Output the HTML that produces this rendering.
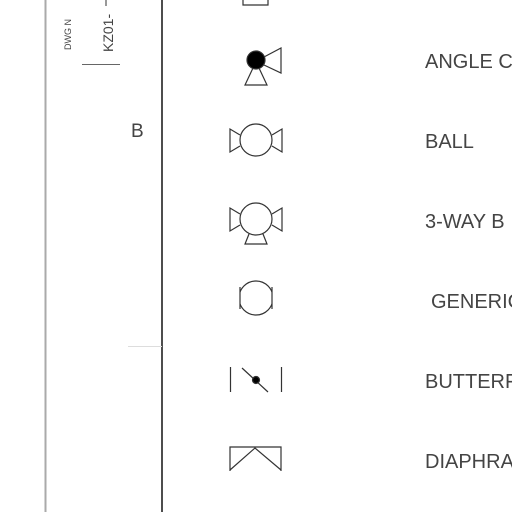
<!DOCTYPE html>
<html><head><style>
html,body{margin:0;padding:0;background:#fff;width:512px;height:512px;overflow:hidden}
svg{display:block}
text{font-family:"Liberation Sans",sans-serif;fill:#444}
</style></head><body>
<svg width="512" height="512" viewBox="0 0 512 512" xmlns="http://www.w3.org/2000/svg">
<defs><clipPath id="gc"><rect x="240" y="270" width="32" height="60"/></clipPath></defs>
<rect width="512" height="512" fill="#fff"/>
<line x1="45.5" y1="0" x2="45.5" y2="512" stroke="#aaa" stroke-width="2"/>
<line x1="162" y1="0" x2="162" y2="512" stroke="#222" stroke-width="1.6"/>
<line x1="82" y1="64.5" x2="120" y2="64.5" stroke="#666" stroke-width="1"/>
<line x1="128" y1="346.5" x2="162" y2="346.5" stroke="#ddd" stroke-width="1"/>
<text transform="translate(71,50) rotate(-90)" font-size="9" fill="#666">DWG N</text>
<text transform="translate(113,52) rotate(-90)" font-size="14" fill="#555">KZ01-</text>
<line x1="106" y1="0" x2="106" y2="6" stroke="#333" stroke-width="1"/>
<text x="131" y="137" font-size="19" fill="#444">B</text>
<g fill="none" stroke="#333" stroke-width="1.2">
<path d="M243 0 V5 H268 V0"/>
<circle cx="256" cy="60" r="9" fill="#000"/>
<path d="M264 57 L281 48 V73 L264 65"/>
<path d="M253 68 L245 85 H267 L259 68"/>
<circle cx="256" cy="140" r="16"/>
<path d="M240 135 L230 129 V152 L240 146 M272 135 L282 129 V152 L272 146"/>
<circle cx="256" cy="219" r="16"/>
<path d="M240 214 L230 208 V231 L240 225 M272 214 L282 208 V231 L272 225"/>
<path d="M249 234 L245 244 H267 L263 234"/>
<circle cx="256" cy="298" r="17" clip-path="url(#gc)"/>
<path d="M240 287 V309 M272 287 V309"/>
<path d="M230.5 367 V392 M281.5 367 V392 M242 368 L268 392"/>
<circle cx="256" cy="380" r="3.5" fill="#000"/>
<path d="M230 471 V447 H281 V471 M230 470 L255 448 L281 470"/>
</g>
<g font-size="20" fill="#555">
<text x="425" y="68">ANGLE C</text>
<text x="425" y="148">BALL</text>
<text x="425" y="228">3-WAY B</text>
<text x="431" y="308">GENERIC</text>
<text x="425" y="388">BUTTERFLY</text>
<text x="425" y="468">DIAPHRAGM</text>
</g>
</svg>
</body></html>
